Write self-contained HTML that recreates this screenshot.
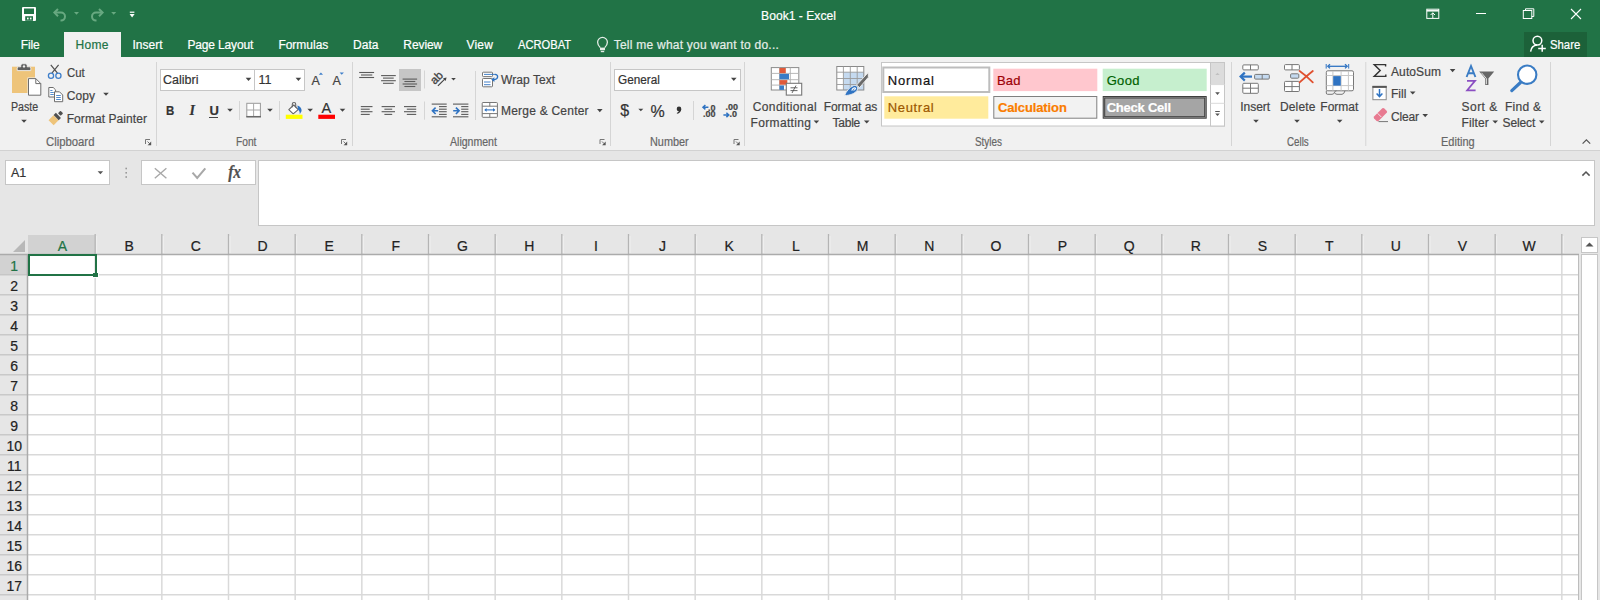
<!DOCTYPE html><html><head><meta charset="utf-8"><style>
html,body{margin:0;padding:0;width:1600px;height:600px;overflow:hidden;background:#fff;font-family:"Liberation Sans", sans-serif;}
.t{position:absolute;white-space:nowrap;line-height:1;-webkit-text-stroke:0.2px currentColor;}
svg{overflow:visible}
</style></head><body>
<div style="position:absolute;left:0px;top:0px;width:1600px;height:57px;background:#217346"></div>
<div style="position:absolute;left:64px;top:32px;width:57px;height:25px;background:#f1f1f1"></div>
<div style="position:absolute;left:0px;top:57px;width:1600px;height:93px;background:#f1f1f1"></div>
<div style="position:absolute;left:0px;top:150px;width:1600px;height:1px;background:#d2d2d2"></div>
<div style="position:absolute;left:0px;top:151px;width:1600px;height:83px;background:#e6e6e6"></div>
<div style="position:absolute;left:5px;top:160px;width:105px;height:25px;background:#fff;border:1px solid #c6c6c6;box-sizing:border-box"></div>
<div style="position:absolute;left:141px;top:160px;width:115px;height:25px;background:#fff;border:1px solid #c6c6c6;box-sizing:border-box"></div>
<div style="position:absolute;left:258px;top:160px;width:1337px;height:66px;background:#fff;border:1px solid #c6c6c6;box-sizing:border-box"></div>
<div style="position:absolute;left:1524px;top:32px;width:63px;height:25px;background:#1c6139"></div>
<div style="position:absolute;left:0px;top:234px;width:1579px;height:21px;background:#e6e6e6"></div>
<div style="position:absolute;left:28px;top:235px;width:67px;height:19px;background:#d2d2d2"></div>
<div style="position:absolute;left:0px;top:255px;width:28px;height:345px;background:#e6e6e6"></div>
<div style="position:absolute;left:0px;top:255px;width:27px;height:20px;background:#d2d2d2"></div>
<div style="position:absolute;left:28px;top:255px;width:1551px;height:345px;background:#ffffff"></div>
<svg style="position:absolute;left:0px;top:0px;pointer-events:none" width="1600" height="600" viewBox="0 0 1600 600"><line x1="95.17" y1="234" x2="95.17" y2="254" stroke="#b4b4b4" stroke-width="1.3"/><line x1="96.67" y1="236" x2="96.67" y2="253" stroke="#f2f2f2" stroke-width="0.8"/><line x1="95.17" y1="255" x2="95.17" y2="600" stroke="#d9d9d9" stroke-width="1.5"/><line x1="161.83" y1="234" x2="161.83" y2="254" stroke="#b4b4b4" stroke-width="1.3"/><line x1="163.33" y1="236" x2="163.33" y2="253" stroke="#f2f2f2" stroke-width="0.8"/><line x1="161.83" y1="255" x2="161.83" y2="600" stroke="#d9d9d9" stroke-width="1.5"/><line x1="228.50" y1="234" x2="228.50" y2="254" stroke="#b4b4b4" stroke-width="1.3"/><line x1="230.00" y1="236" x2="230.00" y2="253" stroke="#f2f2f2" stroke-width="0.8"/><line x1="228.50" y1="255" x2="228.50" y2="600" stroke="#d9d9d9" stroke-width="1.5"/><line x1="295.17" y1="234" x2="295.17" y2="254" stroke="#b4b4b4" stroke-width="1.3"/><line x1="296.67" y1="236" x2="296.67" y2="253" stroke="#f2f2f2" stroke-width="0.8"/><line x1="295.17" y1="255" x2="295.17" y2="600" stroke="#d9d9d9" stroke-width="1.5"/><line x1="361.83" y1="234" x2="361.83" y2="254" stroke="#b4b4b4" stroke-width="1.3"/><line x1="363.33" y1="236" x2="363.33" y2="253" stroke="#f2f2f2" stroke-width="0.8"/><line x1="361.83" y1="255" x2="361.83" y2="600" stroke="#d9d9d9" stroke-width="1.5"/><line x1="428.50" y1="234" x2="428.50" y2="254" stroke="#b4b4b4" stroke-width="1.3"/><line x1="430.00" y1="236" x2="430.00" y2="253" stroke="#f2f2f2" stroke-width="0.8"/><line x1="428.50" y1="255" x2="428.50" y2="600" stroke="#d9d9d9" stroke-width="1.5"/><line x1="495.17" y1="234" x2="495.17" y2="254" stroke="#b4b4b4" stroke-width="1.3"/><line x1="496.67" y1="236" x2="496.67" y2="253" stroke="#f2f2f2" stroke-width="0.8"/><line x1="495.17" y1="255" x2="495.17" y2="600" stroke="#d9d9d9" stroke-width="1.5"/><line x1="561.83" y1="234" x2="561.83" y2="254" stroke="#b4b4b4" stroke-width="1.3"/><line x1="563.33" y1="236" x2="563.33" y2="253" stroke="#f2f2f2" stroke-width="0.8"/><line x1="561.83" y1="255" x2="561.83" y2="600" stroke="#d9d9d9" stroke-width="1.5"/><line x1="628.50" y1="234" x2="628.50" y2="254" stroke="#b4b4b4" stroke-width="1.3"/><line x1="630.00" y1="236" x2="630.00" y2="253" stroke="#f2f2f2" stroke-width="0.8"/><line x1="628.50" y1="255" x2="628.50" y2="600" stroke="#d9d9d9" stroke-width="1.5"/><line x1="695.17" y1="234" x2="695.17" y2="254" stroke="#b4b4b4" stroke-width="1.3"/><line x1="696.67" y1="236" x2="696.67" y2="253" stroke="#f2f2f2" stroke-width="0.8"/><line x1="695.17" y1="255" x2="695.17" y2="600" stroke="#d9d9d9" stroke-width="1.5"/><line x1="761.83" y1="234" x2="761.83" y2="254" stroke="#b4b4b4" stroke-width="1.3"/><line x1="763.33" y1="236" x2="763.33" y2="253" stroke="#f2f2f2" stroke-width="0.8"/><line x1="761.83" y1="255" x2="761.83" y2="600" stroke="#d9d9d9" stroke-width="1.5"/><line x1="828.50" y1="234" x2="828.50" y2="254" stroke="#b4b4b4" stroke-width="1.3"/><line x1="830.00" y1="236" x2="830.00" y2="253" stroke="#f2f2f2" stroke-width="0.8"/><line x1="828.50" y1="255" x2="828.50" y2="600" stroke="#d9d9d9" stroke-width="1.5"/><line x1="895.17" y1="234" x2="895.17" y2="254" stroke="#b4b4b4" stroke-width="1.3"/><line x1="896.67" y1="236" x2="896.67" y2="253" stroke="#f2f2f2" stroke-width="0.8"/><line x1="895.17" y1="255" x2="895.17" y2="600" stroke="#d9d9d9" stroke-width="1.5"/><line x1="961.83" y1="234" x2="961.83" y2="254" stroke="#b4b4b4" stroke-width="1.3"/><line x1="963.33" y1="236" x2="963.33" y2="253" stroke="#f2f2f2" stroke-width="0.8"/><line x1="961.83" y1="255" x2="961.83" y2="600" stroke="#d9d9d9" stroke-width="1.5"/><line x1="1028.50" y1="234" x2="1028.50" y2="254" stroke="#b4b4b4" stroke-width="1.3"/><line x1="1030.00" y1="236" x2="1030.00" y2="253" stroke="#f2f2f2" stroke-width="0.8"/><line x1="1028.50" y1="255" x2="1028.50" y2="600" stroke="#d9d9d9" stroke-width="1.5"/><line x1="1095.17" y1="234" x2="1095.17" y2="254" stroke="#b4b4b4" stroke-width="1.3"/><line x1="1096.67" y1="236" x2="1096.67" y2="253" stroke="#f2f2f2" stroke-width="0.8"/><line x1="1095.17" y1="255" x2="1095.17" y2="600" stroke="#d9d9d9" stroke-width="1.5"/><line x1="1161.83" y1="234" x2="1161.83" y2="254" stroke="#b4b4b4" stroke-width="1.3"/><line x1="1163.33" y1="236" x2="1163.33" y2="253" stroke="#f2f2f2" stroke-width="0.8"/><line x1="1161.83" y1="255" x2="1161.83" y2="600" stroke="#d9d9d9" stroke-width="1.5"/><line x1="1228.50" y1="234" x2="1228.50" y2="254" stroke="#b4b4b4" stroke-width="1.3"/><line x1="1230.00" y1="236" x2="1230.00" y2="253" stroke="#f2f2f2" stroke-width="0.8"/><line x1="1228.50" y1="255" x2="1228.50" y2="600" stroke="#d9d9d9" stroke-width="1.5"/><line x1="1295.17" y1="234" x2="1295.17" y2="254" stroke="#b4b4b4" stroke-width="1.3"/><line x1="1296.67" y1="236" x2="1296.67" y2="253" stroke="#f2f2f2" stroke-width="0.8"/><line x1="1295.17" y1="255" x2="1295.17" y2="600" stroke="#d9d9d9" stroke-width="1.5"/><line x1="1361.83" y1="234" x2="1361.83" y2="254" stroke="#b4b4b4" stroke-width="1.3"/><line x1="1363.33" y1="236" x2="1363.33" y2="253" stroke="#f2f2f2" stroke-width="0.8"/><line x1="1361.83" y1="255" x2="1361.83" y2="600" stroke="#d9d9d9" stroke-width="1.5"/><line x1="1428.50" y1="234" x2="1428.50" y2="254" stroke="#b4b4b4" stroke-width="1.3"/><line x1="1430.00" y1="236" x2="1430.00" y2="253" stroke="#f2f2f2" stroke-width="0.8"/><line x1="1428.50" y1="255" x2="1428.50" y2="600" stroke="#d9d9d9" stroke-width="1.5"/><line x1="1495.17" y1="234" x2="1495.17" y2="254" stroke="#b4b4b4" stroke-width="1.3"/><line x1="1496.67" y1="236" x2="1496.67" y2="253" stroke="#f2f2f2" stroke-width="0.8"/><line x1="1495.17" y1="255" x2="1495.17" y2="600" stroke="#d9d9d9" stroke-width="1.5"/><line x1="1561.83" y1="234" x2="1561.83" y2="254" stroke="#b4b4b4" stroke-width="1.3"/><line x1="1563.33" y1="236" x2="1563.33" y2="253" stroke="#f2f2f2" stroke-width="0.8"/><line x1="1561.83" y1="255" x2="1561.83" y2="600" stroke="#d9d9d9" stroke-width="1.5"/><line x1="0" y1="274.8" x2="27" y2="274.8" stroke="#c4c4c4" stroke-width="1.3"/><line x1="28" y1="274.8" x2="1578" y2="274.8" stroke="#d9d9d9" stroke-width="1.5"/><line x1="0" y1="294.8" x2="27" y2="294.8" stroke="#c4c4c4" stroke-width="1.3"/><line x1="28" y1="294.8" x2="1578" y2="294.8" stroke="#d9d9d9" stroke-width="1.5"/><line x1="0" y1="314.8" x2="27" y2="314.8" stroke="#c4c4c4" stroke-width="1.3"/><line x1="28" y1="314.8" x2="1578" y2="314.8" stroke="#d9d9d9" stroke-width="1.5"/><line x1="0" y1="334.8" x2="27" y2="334.8" stroke="#c4c4c4" stroke-width="1.3"/><line x1="28" y1="334.8" x2="1578" y2="334.8" stroke="#d9d9d9" stroke-width="1.5"/><line x1="0" y1="354.8" x2="27" y2="354.8" stroke="#c4c4c4" stroke-width="1.3"/><line x1="28" y1="354.8" x2="1578" y2="354.8" stroke="#d9d9d9" stroke-width="1.5"/><line x1="0" y1="374.8" x2="27" y2="374.8" stroke="#c4c4c4" stroke-width="1.3"/><line x1="28" y1="374.8" x2="1578" y2="374.8" stroke="#d9d9d9" stroke-width="1.5"/><line x1="0" y1="394.8" x2="27" y2="394.8" stroke="#c4c4c4" stroke-width="1.3"/><line x1="28" y1="394.8" x2="1578" y2="394.8" stroke="#d9d9d9" stroke-width="1.5"/><line x1="0" y1="414.8" x2="27" y2="414.8" stroke="#c4c4c4" stroke-width="1.3"/><line x1="28" y1="414.8" x2="1578" y2="414.8" stroke="#d9d9d9" stroke-width="1.5"/><line x1="0" y1="434.8" x2="27" y2="434.8" stroke="#c4c4c4" stroke-width="1.3"/><line x1="28" y1="434.8" x2="1578" y2="434.8" stroke="#d9d9d9" stroke-width="1.5"/><line x1="0" y1="454.8" x2="27" y2="454.8" stroke="#c4c4c4" stroke-width="1.3"/><line x1="28" y1="454.8" x2="1578" y2="454.8" stroke="#d9d9d9" stroke-width="1.5"/><line x1="0" y1="474.8" x2="27" y2="474.8" stroke="#c4c4c4" stroke-width="1.3"/><line x1="28" y1="474.8" x2="1578" y2="474.8" stroke="#d9d9d9" stroke-width="1.5"/><line x1="0" y1="494.8" x2="27" y2="494.8" stroke="#c4c4c4" stroke-width="1.3"/><line x1="28" y1="494.8" x2="1578" y2="494.8" stroke="#d9d9d9" stroke-width="1.5"/><line x1="0" y1="514.8" x2="27" y2="514.8" stroke="#c4c4c4" stroke-width="1.3"/><line x1="28" y1="514.8" x2="1578" y2="514.8" stroke="#d9d9d9" stroke-width="1.5"/><line x1="0" y1="534.8" x2="27" y2="534.8" stroke="#c4c4c4" stroke-width="1.3"/><line x1="28" y1="534.8" x2="1578" y2="534.8" stroke="#d9d9d9" stroke-width="1.5"/><line x1="0" y1="554.8" x2="27" y2="554.8" stroke="#c4c4c4" stroke-width="1.3"/><line x1="28" y1="554.8" x2="1578" y2="554.8" stroke="#d9d9d9" stroke-width="1.5"/><line x1="0" y1="574.8" x2="27" y2="574.8" stroke="#c4c4c4" stroke-width="1.3"/><line x1="28" y1="574.8" x2="1578" y2="574.8" stroke="#d9d9d9" stroke-width="1.5"/><line x1="0" y1="594.8" x2="27" y2="594.8" stroke="#c4c4c4" stroke-width="1.3"/><line x1="28" y1="594.8" x2="1578" y2="594.8" stroke="#d9d9d9" stroke-width="1.5"/><line x1="0" y1="254.5" x2="1579" y2="254.5" stroke="#ababab" stroke-width="1.5"/><line x1="27.5" y1="255" x2="27.5" y2="600" stroke="#ababab" stroke-width="1.5"/><line x1="1578.5" y1="255" x2="1578.5" y2="600" stroke="#bdbdbd" stroke-width="1"/></svg>
<svg style="position:absolute;left:0px;top:234px;" width="28" height="21" viewBox="0 0 28 21"><polygon points="25,6 25,18 13,18" fill="#b8b8b8"/></svg>
<div style="position:absolute;left:28px;top:254px;width:69px;height:22px;border:2px solid #217346;box-sizing:border-box"></div>
<div style="position:absolute;left:92.5px;top:272.5px;width:6px;height:5.5px;background:#fff"></div>
<div style="position:absolute;left:93.3px;top:273.2px;width:4.5px;height:4px;background:#217346"></div>
<div style="position:absolute;left:1579px;top:234px;width:21px;height:366px;background:#e6e6e6"></div>
<div style="position:absolute;left:1581px;top:237px;width:17px;height:16px;background:#fff;border:1px solid #c6c6c6;box-sizing:border-box"></div>
<div style="position:absolute;left:1581px;top:254px;width:17px;height:360px;background:#fff;border:1px solid #c6c6c6;box-sizing:border-box"></div>
<svg style="position:absolute;left:1585px;top:242px;" width="9" height="5" viewBox="0 0 9 5"><polygon points="0.5,4.5 4.5,0.5 8.5,4.5" fill="#555"/></svg>
<svg style="position:absolute;left:0px;top:0px;" width="1600" height="600" viewBox="0 0 1600 600"><rect x="22" y="7" width="14" height="14" rx="1" fill="#ffffff"/><rect x="24" y="8.5" width="10" height="5.5" fill="#217346"/><rect x="25.2" y="16.2" width="7.8" height="4.6" fill="#217346"/><rect x="27" y="17.6" width="1.6" height="1.8" fill="#ffffff"/><rect x="29.9" y="17.6" width="1.6" height="1.8" fill="#ffffff"/><path d="M55.5,12.6 H61 A4,4 0 0 1 61,20.6 H60.5" stroke="#68a981" stroke-width="2" fill="none"/><path d="M58,9 L54.4,12.6 L58,16.2" stroke="#68a981" stroke-width="2" fill="none"/><polygon points="74.0,12.0 79.0,12.0 76.5,14.8" fill="#68a981"/><path d="M101.5,12.6 H96 A4,4 0 0 0 96,20.6 H96.5" stroke="#68a981" stroke-width="2" fill="none"/><path d="M99,9 L102.6,12.6 L99,16.2" stroke="#68a981" stroke-width="2" fill="none"/><polygon points="111.2,12.0 116.2,12.0 113.7,14.8" fill="#68a981"/><rect x="129.8" y="11.6" width="4.6" height="1.2" fill="#ffffff"/><polygon points="129.6,14 134.6,14 132.1,17.4" fill="#ffffff"/><rect x="1426.8" y="9.2" width="12" height="9.2" stroke="#ffffff" stroke-width="1" fill="none"/><line x1="1426.8" y1="10.8" x2="1438.8" y2="10.8" stroke="#ffffff" stroke-width="1.5"/><path d="M1432.8,18 V12.8 M1430.6,15 L1432.8,12.8 L1435,15" stroke="#ffffff" stroke-width="1" fill="none"/><line x1="1476" y1="13.5" x2="1486" y2="13.5" stroke="#ffffff" stroke-width="1"/><rect x="1523.3" y="10.5" width="8.5" height="8" stroke="#ffffff" stroke-width="1" fill="none"/><path d="M1525.5,10.5 V8.8 H1533.8 V16.5 H1531.8" stroke="#ffffff" stroke-width="1" fill="none"/><path d="M1571,9 L1581,19 M1581,9 L1571,19" stroke="#ffffff" stroke-width="1.1"/><path d="M600.3,47.6 C598.6,46 597.6,44.2 597.6,42.3 A4.9,4.9 0 0 1 607.4,42.3 C607.4,44.2 606.4,46 604.7,47.6" stroke="#e3ece6" stroke-width="1.3" fill="none"/><rect x="600" y="47.6" width="5" height="2.6" fill="#e3ece6"/><rect x="600.8" y="50.8" width="3.4" height="1.4" fill="#e3ece6"/><circle cx="1537.4" cy="40.6" r="4.4" stroke="#ffffff" stroke-width="1.5" fill="none"/><path d="M1530.6,51.6 C1531.2,47.6 1533.6,45.4 1537,45.1" stroke="#ffffff" stroke-width="1.5" fill="none"/><path d="M1542.2,44.8 V51.8 M1538.2,48.4 H1545.8" stroke="#ffffff" stroke-width="1.5"/><rect x="12" y="66.7" width="23" height="26.3" fill="#eec47a"/><path d="M17.2,70.6 V68.2 Q17.2,66.8 18.6,66.8 H20.8 V65.4 Q20.8,63.8 22.4,63.8 H25.6 Q27.2,63.8 27.2,65.4 V66.8 H29.4 Q30.8,66.8 30.8,68.2 V70.6 Z" fill="#5f5f5f" stroke="#f1f1f1" stroke-width="0.9"/><circle cx="24" cy="66.4" r="1.2" fill="#f1f1f1"/><path d="M27.5,77.6 H36.3 L41.8,83.1 V96.2 H27.5 Z" fill="#f1f1f1"/><path d="M28.5,78.6 H35.8 L40.8,83.6 V95.2 H28.5 Z" fill="#fff" stroke="#6d6d6d" stroke-width="1"/><path d="M35.8,78.6 V83.6 H40.8" fill="none" stroke="#6d6d6d" stroke-width="1"/><polygon points="21.2,119.75 26.8,119.75 24,122.85" fill="#444"/><path d="M50.8,64.8 L57.5,73.2 M58.6,64.8 L51.9,73.2" stroke="#505050" stroke-width="1.2"/><circle cx="51" cy="75.8" r="2.6" stroke="#3f7fca" stroke-width="1.3" fill="none"/><circle cx="58.4" cy="75.8" r="2.6" stroke="#3f7fca" stroke-width="1.3" fill="none"/><path d="M48.8,87.5 H53.2 L55.6,89.9 V97 H48.8 Z" fill="#fff" stroke="#6d6d6d" stroke-width="1"/><path d="M50.3,90.5 H52.5 M50.3,92.5 H53.8 M50.3,94.5 H53.8" stroke="#3f7fca" stroke-width="0.9"/><path d="M54.5,91.8 H59.5 L62.7,95 V101.7 H54.5 Z" fill="#fff" stroke="#6d6d6d" stroke-width="1"/><path d="M56.2,95.5 H60.8 M56.2,97.5 H60.8 M56.2,99.5 H60.8" stroke="#3f7fca" stroke-width="0.9"/><polygon points="103.2,92.75 108.8,92.75 106,95.85" fill="#444"/><g transform="translate(56.5,117.3) rotate(-45)"><rect x="-7.6" y="-3.6" width="6.9" height="7.2" fill="#eec47a"/><rect x="-0.5" y="-3.6" width="3.2" height="7.2" fill="#4f4f4f"/><rect x="3.9" y="-1.9" width="3.6" height="3.8" rx="0.8" fill="#4f4f4f"/></g><path d="M145.5,144 V139.5 H150" stroke="#777" stroke-width="1" fill="none"/><path d="M147.5,141.5 L149.8,143.8" stroke="#666" stroke-width="0.9" fill="none"/><polygon points="151.2,141.6 151.2,145.2 147.6,145.2" fill="#555"/><line x1="156.5" y1="62" x2="156.5" y2="146" stroke="#d5d5d5" stroke-width="1"/><rect x="160.5" y="69.5" width="94" height="21" fill="#fff" stroke="#c6c6c6" stroke-width="1"/><rect x="254.5" y="69.5" width="50" height="21" fill="#fff" stroke="#c6c6c6" stroke-width="1"/><polygon points="245.7,77.85000000000001 251.3,77.85000000000001 248.5,80.95" fill="#444"/><polygon points="295.59999999999997,77.85000000000001 301.2,77.85000000000001 298.4,80.95" fill="#444"/><polygon points="318.8,74.7 320.9,72.5 323,74.7" fill="#3f7fca"/><polygon points="339.6,72.5 343.9,72.5 341.75,74.7" fill="#3f7fca"/><polygon points="227.2,108.65 232.8,108.65 230,111.75" fill="#444"/><line x1="239.5" y1="101" x2="239.5" y2="120" stroke="#d5d5d5" stroke-width="1"/><rect x="246.8" y="103.3" width="13.6" height="13.4" fill="#fff" stroke="#9a9a9a" stroke-width="1"/><path d="M253.6,103.3 V116.7 M246.8,110 H260.4" stroke="#a8a8a8" stroke-width="1"/><line x1="246.3" y1="116.7" x2="261" y2="116.7" stroke="#6a6a6a" stroke-width="1.5"/><polygon points="267.2,108.65 272.8,108.65 270,111.75" fill="#444"/><line x1="279.5" y1="101" x2="279.5" y2="120" stroke="#d5d5d5" stroke-width="1"/><path d="M288.8,109.6 L293.8,105 L298.2,109.6 L293.2,113.8 Z" fill="#fff" stroke="#666" stroke-width="1.1" stroke-linejoin="round"/><path d="M292.3,107.2 V104.2 A1.7,1.7 0 0 1 295.7,104.2 V107.4" stroke="#666" stroke-width="1.1" fill="none"/><path d="M297.4,105.6 C300,106.4 301.8,108.4 301.6,111 L299.8,114.2 C299.8,112.2 299.4,110.4 298,109.4 Z" fill="#2f73c2"/><rect x="285.8" y="114.7" width="16.7" height="4.2" fill="#ffff00"/><polygon points="307.4,108.65 313.0,108.65 310.2,111.75" fill="#444"/><rect x="318.3" y="114.7" width="16.7" height="4.2" fill="#ff0000"/><polygon points="339.7,108.65 345.3,108.65 342.5,111.75" fill="#444"/><path d="M341.5,144 V139.5 H346" stroke="#777" stroke-width="1" fill="none"/><path d="M343.5,141.5 L345.8,143.8" stroke="#666" stroke-width="0.9" fill="none"/><polygon points="347.2,141.6 347.2,145.2 343.6,145.2" fill="#555"/><line x1="352.5" y1="62" x2="352.5" y2="146" stroke="#d5d5d5" stroke-width="1"/><line x1="359.2" y1="72.5" x2="374.1" y2="72.5" stroke="#5a5a5a" stroke-width="1.1"/><line x1="361" y1="75" x2="372.3" y2="75" stroke="#5a5a5a" stroke-width="1.1"/><line x1="359.2" y1="77.5" x2="374.1" y2="77.5" stroke="#5a5a5a" stroke-width="1.1"/><line x1="381.1" y1="75.6" x2="395.8" y2="75.6" stroke="#5a5a5a" stroke-width="1.1"/><line x1="383" y1="78.1" x2="393.7" y2="78.1" stroke="#5a5a5a" stroke-width="1.1"/><line x1="381.1" y1="80.7" x2="395.8" y2="80.7" stroke="#5a5a5a" stroke-width="1.1"/><line x1="383" y1="83.3" x2="393.7" y2="83.3" stroke="#5a5a5a" stroke-width="1.1"/><rect x="399" y="69" width="22" height="22" fill="#c6c6c6"/><line x1="402.6" y1="79.1" x2="417.1" y2="79.1" stroke="#5a5a5a" stroke-width="1.1"/><line x1="404.4" y1="81.5" x2="415.3" y2="81.5" stroke="#5a5a5a" stroke-width="1.1"/><line x1="402.6" y1="84" x2="417.1" y2="84" stroke="#5a5a5a" stroke-width="1.1"/><line x1="404.4" y1="86.5" x2="415.3" y2="86.5" stroke="#5a5a5a" stroke-width="1.1"/><line x1="424.5" y1="70.5" x2="424.5" y2="88.5" stroke="#d5d5d5" stroke-width="1"/><text x="0" y="0" font-family="Liberation Sans" font-size="11.5" fill="#444" stroke="#444" stroke-width="0.35" transform="translate(434.8,84.9) rotate(-45)">ab</text><path d="M437.9,85.9 L445,78.8" stroke="#444" stroke-width="1.2" fill="none"/><polygon points="446.6,77.4 443,78.3 445.7,81" fill="#444"/><polygon points="451.2,78.0 455.8,78.0 453.5,80.6" fill="#444"/><line x1="360.8" y1="106.6" x2="372.5" y2="106.6" stroke="#5a5a5a" stroke-width="1.1"/><line x1="360.8" y1="109.2" x2="369.7" y2="109.2" stroke="#5a5a5a" stroke-width="1.1"/><line x1="360.8" y1="111.7" x2="372.5" y2="111.7" stroke="#5a5a5a" stroke-width="1.1"/><line x1="360.8" y1="114.4" x2="369.7" y2="114.4" stroke="#5a5a5a" stroke-width="1.1"/><line x1="381.6" y1="106.6" x2="395" y2="106.6" stroke="#5a5a5a" stroke-width="1.1"/><line x1="384.4" y1="109.2" x2="392.2" y2="109.2" stroke="#5a5a5a" stroke-width="1.1"/><line x1="381.6" y1="111.7" x2="395" y2="111.7" stroke="#5a5a5a" stroke-width="1.1"/><line x1="384.4" y1="114.4" x2="392.2" y2="114.4" stroke="#5a5a5a" stroke-width="1.1"/><line x1="404" y1="106.6" x2="416.2" y2="106.6" stroke="#5a5a5a" stroke-width="1.1"/><line x1="406.8" y1="109.2" x2="416.2" y2="109.2" stroke="#5a5a5a" stroke-width="1.1"/><line x1="404" y1="111.7" x2="416.2" y2="111.7" stroke="#5a5a5a" stroke-width="1.1"/><line x1="406.8" y1="114.4" x2="416.2" y2="114.4" stroke="#5a5a5a" stroke-width="1.1"/><line x1="424.5" y1="101.5" x2="424.5" y2="119.7" stroke="#d5d5d5" stroke-width="1"/><line x1="431.7" y1="104.1" x2="446.7" y2="104.1" stroke="#5a5a5a" stroke-width="1.1"/><line x1="439" y1="106.6" x2="446.7" y2="106.6" stroke="#5a5a5a" stroke-width="1.1"/><line x1="439" y1="109.2" x2="446.7" y2="109.2" stroke="#5a5a5a" stroke-width="1.1"/><line x1="439" y1="111.7" x2="446.7" y2="111.7" stroke="#5a5a5a" stroke-width="1.1"/><line x1="439" y1="114.4" x2="446.7" y2="114.4" stroke="#5a5a5a" stroke-width="1.1"/><line x1="431.7" y1="116.8" x2="446.7" y2="116.8" stroke="#5a5a5a" stroke-width="1.1"/><path d="M438.2,110.8 H432.5 M435.6,107.6 L432.4,110.8 L435.6,114" stroke="#2f73c2" stroke-width="1.6" fill="none"/><line x1="453" y1="104.1" x2="468.4" y2="104.1" stroke="#5a5a5a" stroke-width="1.1"/><line x1="461.2" y1="106.6" x2="468.4" y2="106.6" stroke="#5a5a5a" stroke-width="1.1"/><line x1="461.2" y1="109.2" x2="468.4" y2="109.2" stroke="#5a5a5a" stroke-width="1.1"/><line x1="461.2" y1="111.7" x2="468.4" y2="111.7" stroke="#5a5a5a" stroke-width="1.1"/><line x1="461.2" y1="114.4" x2="468.4" y2="114.4" stroke="#5a5a5a" stroke-width="1.1"/><line x1="453" y1="116.8" x2="468.4" y2="116.8" stroke="#5a5a5a" stroke-width="1.1"/><path d="M453.2,110.8 H459 M455.9,107.6 L459.1,110.8 L455.9,114" stroke="#2f73c2" stroke-width="1.6" fill="none"/><line x1="475.5" y1="71" x2="475.5" y2="120" stroke="#d5d5d5" stroke-width="1"/><rect x="482.5" y="72.2" width="10" height="4.4" rx="0.8" fill="#fff" stroke="#777" stroke-width="1"/><rect x="482.5" y="78.5" width="10" height="8.3" rx="0.8" fill="#fff" stroke="#777" stroke-width="1"/><path d="M484,74.4 H495 M484,82 H490.5 M484,84.7 H490.5" stroke="#2f73c2" stroke-width="0.9"/><path d="M495,74.4 C498.5,74.6 498.7,79 494.5,79.6 H492.2" stroke="#2f73c2" stroke-width="1.3" fill="none"/><polygon points="491.2,79.6 494.4,77.2 494.4,82" fill="#2f73c2"/><rect x="482.2" y="102.5" width="15.2" height="14.8" rx="0.8" fill="#fff" stroke="#777" stroke-width="1"/><path d="M482.2,106.2 H497.4 M482.2,113.6 H497.4 M489.8,102.5 V106.2 M489.8,113.6 V117.3" stroke="#777" stroke-width="1"/><path d="M485,109.9 H494.6" stroke="#2f73c2" stroke-width="1.1"/><polygon points="484.2,109.9 486.6,108.1 486.6,111.7" fill="#2f73c2"/><polygon points="495.4,109.9 493,108.1 493,111.7" fill="#2f73c2"/><polygon points="597.0,109.05 602.5999999999999,109.05 599.8,112.14999999999999" fill="#444"/><path d="M600.0,144 V139.5 H604.5" stroke="#777" stroke-width="1" fill="none"/><path d="M602.0,141.5 L604.3,143.8" stroke="#666" stroke-width="0.9" fill="none"/><polygon points="605.7,141.6 605.7,145.2 602.1,145.2" fill="#555"/><line x1="610.5" y1="62" x2="610.5" y2="146" stroke="#d5d5d5" stroke-width="1"/><rect x="614.5" y="69.5" width="126" height="21" fill="#fff" stroke="#c6c6c6" stroke-width="1"/><polygon points="731.0,77.85000000000001 736.5999999999999,77.85000000000001 733.8,80.95" fill="#444"/><polygon points="638.3,108.7 643.3,108.7 640.8,111.3" fill="#444"/><line x1="693.5" y1="101" x2="693.5" y2="120" stroke="#d5d5d5" stroke-width="1"/><circle cx="679" cy="108.9" r="2.3" fill="#333"/><path d="M681.2,109 C681.3,111.5 679.8,113.2 677,113.8 L676.8,113 C678.5,112.2 679.3,111 679.2,109.5 Z" fill="#333"/><path d="M708.4,107.2 H703.2 M705.4,105 L703,107.2 L705.4,109.4" stroke="#2f73c2" stroke-width="1.5" fill="none"/><path d="M723.4,114.9 H728.6 M726.4,112.7 L728.8,114.9 L726.4,117.1" stroke="#2f73c2" stroke-width="1.5" fill="none"/><path d="M734.0,144 V139.5 H738.5" stroke="#777" stroke-width="1" fill="none"/><path d="M736.0,141.5 L738.3,143.8" stroke="#666" stroke-width="0.9" fill="none"/><polygon points="739.7,141.6 739.7,145.2 736.1,145.2" fill="#555"/><line x1="744.5" y1="62" x2="744.5" y2="146" stroke="#d5d5d5" stroke-width="1"/><rect x="771.3" y="67.6" width="27.5" height="22.4" fill="#fff" stroke="#8a8a8a" stroke-width="1"/><path d="M779.5,67.6 V90 M790.3,67.6 V90 M771.3,73.4 H798.8 M771.3,79.7 H798.8 M771.3,85.1 H798.8" stroke="#b0b0b0" stroke-width="0.9"/><rect x="779.5" y="68" width="6.3" height="5.2" fill="#e05a3a"/><rect x="779.5" y="73.9" width="9.5" height="5.4" fill="#3a7cc6"/><rect x="779.5" y="80.1" width="7.8" height="4.6" fill="#e05a3a"/><rect x="779.5" y="85.5" width="4.5" height="4.4" fill="#3a7cc6"/><rect x="786.3" y="83.3" width="15.4" height="11.8" fill="#fff" stroke="#777" stroke-width="1.1"/><path d="M790.5,87.8 H797.5 M790.5,90.6 H797.5 M796,85.5 L792,93" stroke="#555" stroke-width="0.9"/><polygon points="813.6,120.45 819.1999999999999,120.45 816.4,123.55" fill="#444"/><rect x="836.8" y="66.5" width="27" height="23.5" fill="#fff"/><rect x="843.4" y="72.2" width="20.7" height="18" fill="#c5daf0"/><rect x="836.8" y="66.5" width="27" height="23.5" fill="none" stroke="#8a8a8a" stroke-width="1"/><path d="M843.4,66.5 V90 M850.3,66.5 V90 M857.2,66.5 V90 M836.8,72.2 H863.8 M836.8,78.5 H863.8 M836.8,84.5 H863.8" stroke="#9a9a9a" stroke-width="0.9"/><path d="M856.6,85 L868.2,72.6 L868.4,77.2 L859.6,87.6 Z" fill="#6a6a6a" stroke="#f1f1f1" stroke-width="0.9"/><path d="M844.6,95.6 C846.2,91.2 849.6,87 853.6,85.6 C856.6,84.8 858.6,87.2 857.2,90.2 C855,93.8 849.6,95.4 844.6,95.6 Z" fill="#2f73c2" stroke="#f1f1f1" stroke-width="0.9"/><path d="M851.8,90.6 C852.4,88.4 854.2,87.4 855.6,88.2 C855.4,89.4 854.6,90.2 853.4,90.2" stroke="#fff" stroke-width="1.1" fill="none"/><polygon points="863.9000000000001,120.45 869.5,120.45 866.7,123.55" fill="#444"/><rect x="881.5" y="62.5" width="343" height="63.5" fill="#fff" stroke="#c6c6c6" stroke-width="1"/><rect x="883.3" y="67.5" width="106" height="24.5" fill="#fff" stroke="#bdbdbd" stroke-width="2"/><rect x="993.3" y="68.7" width="104" height="22.4" fill="#ffc7ce"/><rect x="1102.7" y="68.7" width="104" height="22.4" fill="#c6efce"/><rect x="884.3" y="96.3" width="104" height="22.4" fill="#ffeb9c"/><rect x="993.8" y="96.5" width="103" height="21.7" fill="#f2f2f2" stroke="#7f7f7f" stroke-width="1"/><rect x="1103.2" y="96.5" width="103" height="21.7" fill="#a5a5a5" stroke="#3f3f3f" stroke-width="1"/><rect x="1104.7" y="98" width="100" height="18.7" fill="none" stroke="#3f3f3f" stroke-width="1"/><rect x="1210.5" y="62.5" width="14" height="63.5" fill="#fff" stroke="#c6c6c6" stroke-width="1"/><rect x="1211" y="63" width="13" height="21.5" fill="#dcdcdc"/><path d="M1210.5,84.6 H1224.5 M1210.5,103.3 H1224.5" stroke="#dadada" stroke-width="1"/><polygon points="1215.3,75 1219.7,75 1217.5,72.8" fill="#c0c0c0"/><polygon points="1215.2,92.3 1219.8,92.3 1217.5,94.89999999999999" fill="#555"/><rect x="1215.2" y="111" width="4.6" height="1" fill="#555"/><polygon points="1215.2,113.5 1219.8,113.5 1217.5,116.1" fill="#555"/><line x1="1231.5" y1="62" x2="1231.5" y2="146" stroke="#d5d5d5" stroke-width="1"/><rect x="1242.8" y="64.9" width="15.5" height="5.0" rx="1" fill="#fff" stroke="#777" stroke-width="1"/><line x1="1250.5" y1="64.9" x2="1250.5" y2="69.9" stroke="#777" stroke-width="1"/><rect x="1254.6" y="74.4" width="14.700000000000045" height="4.699999999999989" rx="1" fill="#c5daf0" stroke="#777" stroke-width="1"/><line x1="1262.2" y1="74.4" x2="1262.2" y2="79.1" stroke="#777" stroke-width="1"/><rect x="1242.8" y="83.3" width="15.5" height="10" rx="1" fill="#fff" stroke="#777" stroke-width="1"/><path d="M1250.5,83.3 V93.3 M1242.8,88.2 H1258.3" stroke="#777" stroke-width="1"/><path d="M1252,76.6 H1242" stroke="#2f73c2" stroke-width="2.2"/><path d="M1244.8,72.6 L1240.6,76.6 L1244.8,80.6" stroke="#2f73c2" stroke-width="2.2" fill="none"/><polygon points="1253.2,119.75 1258.8,119.75 1256,122.85" fill="#444"/><rect x="1284.5" y="64.6" width="14.900000000000091" height="5.300000000000011" rx="1" fill="#fff" stroke="#777" stroke-width="1"/><line x1="1292" y1="64.6" x2="1292" y2="69.9" stroke="#777" stroke-width="1"/><rect x="1290.6" y="73.8" width="8.200000000000045" height="4.400000000000006" rx="1" fill="#c5daf0" stroke="#777" stroke-width="1"/><rect x="1284.5" y="81.4" width="14.9" height="10.1" rx="1" fill="#fff" stroke="#777" stroke-width="1"/><path d="M1292,81.4 V91.5 M1284.5,86.6 H1299.4" stroke="#777" stroke-width="1"/><path d="M1299.6,71 Q1306,75.5 1312.8,82.3 M1312.8,71 Q1306,76.5 1299.6,82.3" stroke="#e0502f" stroke-width="1.8" fill="none" stroke-linecap="round"/><polygon points="1294.2,119.75 1299.8,119.75 1297,122.85" fill="#444"/><path d="M1326.2,64 V68.6 M1348.7,64 V68.6" stroke="#2f73c2" stroke-width="1"/><path d="M1328.5,66.3 H1346.4" stroke="#2f73c2" stroke-width="1.3"/><path d="M1330,64.2 L1327.8,66.3 L1330,68.4 M1345,64.2 L1347.2,66.3 L1345,68.4" stroke="#2f73c2" stroke-width="1.3" fill="none"/><rect x="1326.3" y="70.8" width="27.2" height="20" rx="1.5" fill="#fff" stroke="#777" stroke-width="1"/><path d="M1332.9,71 V90.6 M1341.1,71 V90.6 M1348.4,71 V90.6 M1326.5,75.5 H1353.3 M1326.5,85.6 H1353.3" stroke="#c8c8c8" stroke-width="1"/><rect x="1333.2" y="76.1" width="7.6" height="9.5" fill="#2f73c2"/><path d="M1326.3,90.8 V93 Q1326.3,94.3 1327.6,94.3 H1332 Q1334,94.3 1334.5,92.3 Q1335,90.8 1336.5,90.8 M1334.5,92.3 Q1335,94.3 1337,94.3 H1342 Q1344,94.3 1345,90.8" stroke="#777" stroke-width="1" fill="none"/><polygon points="1336.9,119.75 1342.5,119.75 1339.7,122.85" fill="#444"/><line x1="1365.8" y1="62" x2="1365.8" y2="146" stroke="#d5d5d5" stroke-width="1"/><path d="M1385.6,66.5 V64.6 H1374.2 L1380.2,70.6 L1374.2,76.4 H1385.8 V74.5" stroke="#333" stroke-width="1.4" fill="none" stroke-linejoin="miter"/><polygon points="1449.8,69.05 1455.3999999999999,69.05 1452.6,72.14999999999999" fill="#444"/><rect x="1372.9" y="86.4" width="13.3" height="13.3" fill="#fff" stroke="#8a8a8a" stroke-width="1"/><line x1="1372.4" y1="86.9" x2="1386.7" y2="86.9" stroke="#555" stroke-width="2"/><path d="M1379.5,89 V96.5 M1376.6,93.6 L1379.5,96.6 L1382.4,93.6" stroke="#2f73c2" stroke-width="1.5" fill="none"/><polygon points="1409.9,91.45 1415.5,91.45 1412.7,94.55" fill="#444"/><path d="M1374,116.6 L1382.3,108.3 Q1383.4,107.6 1384.4,108.5 L1386.8,110.9 Q1387.5,111.8 1386.7,112.8 L1378.5,121 Q1377.6,121.7 1376.6,121 L1374.1,118.6 Q1373.3,117.6 1374,116.6 Z" fill="#e87a91"/><path d="M1377.5,113.2 L1381.3,117" stroke="#f1f1f1" stroke-width="0.9"/><line x1="1378.5" y1="121.6" x2="1388" y2="121.6" stroke="#777" stroke-width="1"/><polygon points="1422.4,114.05 1428.0,114.05 1425.2,117.14999999999999" fill="#444"/><path d="M1466.6,77 L1471,66 L1475.4,77 M1468.3,73.2 H1473.7" stroke="#3a7cc4" stroke-width="1.9" fill="none"/><path d="M1467,80.8 H1475 L1467.2,90.3 H1475.6" stroke="#8b4fc2" stroke-width="1.8" fill="none" stroke-linejoin="miter"/><path d="M1479.2,71.4 H1494.2 L1488.4,78.4 V85 H1485.2 V78.4 Z" fill="#666"/><path d="M1481.5,72.8 L1486.4,78.6 V84.2" stroke="#fff" stroke-width="0.8" fill="none"/><polygon points="1492.4,120.45 1498.0,120.45 1495.2,123.55" fill="#444"/><circle cx="1527.2" cy="74.7" r="9.2" fill="#fff" stroke="#3a7cc4" stroke-width="2.1"/><line x1="1520.5" y1="82.5" x2="1511.8" y2="90.6" stroke="#3a7cc4" stroke-width="3.2" stroke-linecap="round"/><polygon points="1538.9,120.45 1544.5,120.45 1541.7,123.55" fill="#444"/><line x1="1550.5" y1="62" x2="1550.5" y2="146" stroke="#d5d5d5" stroke-width="1"/><path d="M1582.6,143.6 L1586.4,139.8 L1590.2,143.6" stroke="#555" stroke-width="1.2" fill="none"/><polygon points="97.65,171.2 103.15,171.2 100.4,174.2" fill="#555"/><rect x="125.4" y="167.7" width="1.6" height="1.6" fill="#999"/><rect x="125.4" y="172.0" width="1.6" height="1.6" fill="#999"/><rect x="125.4" y="176.2" width="1.6" height="1.6" fill="#999"/><path d="M154.8,168.3 L166.4,178.2 M166.4,168.3 L154.8,178.2" stroke="#a8a8a8" stroke-width="1.4"/><path d="M192.5,172.6 L197.2,178 L205.3,168.4" stroke="#a8a8a8" stroke-width="2" fill="none"/><path d="M1582.4,175.6 L1586,172 L1589.6,175.6" stroke="#555" stroke-width="1.5" fill="none"/></svg>
<div style="position:absolute;left:209.3px;top:116.5px;width:8.8px;height:1.2px;background:#444"></div>
<div class="t" id="t0" style="left:761.00px;top:9.20px;font-size:13px;color:#ffffff;transform:scaleX(0.9330);transform-origin:1.00px 0;">Book1 - Excel</div>
<div class="t" id="t1" style="left:20.80px;top:39.14px;font-size:12px;color:#ffffff;letter-spacing:-0.154px;">File</div>
<div class="t" id="t2" style="left:132.40px;top:39.14px;font-size:12px;color:#ffffff;letter-spacing:0.024px;">Insert</div>
<div class="t" id="t3" style="left:187.40px;top:39.14px;font-size:12px;color:#ffffff;letter-spacing:-0.145px;">Page Layout</div>
<div class="t" id="t4" style="left:278.40px;top:39.14px;font-size:12px;color:#ffffff;letter-spacing:-0.016px;">Formulas</div>
<div class="t" id="t5" style="left:352.90px;top:39.14px;font-size:12px;color:#ffffff;letter-spacing:0.075px;">Data</div>
<div class="t" id="t6" style="left:403.30px;top:39.14px;font-size:12px;color:#ffffff;letter-spacing:-0.076px;">Review</div>
<div class="t" id="t7" style="left:466.50px;top:39.14px;font-size:12px;color:#ffffff;letter-spacing:0.191px;">View</div>
<div class="t" id="t8" style="left:517.70px;top:39.14px;font-size:12px;color:#ffffff;transform:scaleX(0.9310);transform-origin:0.00px 0;">ACROBAT</div>
<div class="t" id="t9" style="left:75.40px;top:39.14px;font-size:12px;color:#217346;letter-spacing:0.355px;">Home</div>
<div class="t" id="t10" style="left:613.70px;top:39.14px;font-size:12px;color:#e6eee9;letter-spacing:0.243px;">Tell me what you want to do...</div>
<div class="t" id="t11" style="left:1549.50px;top:39.24px;font-size:12px;color:#ffffff;transform:scaleX(0.9429);transform-origin:0.00px 0;">Share</div>
<div class="t" id="t12" style="left:10.50px;top:101.04px;font-size:12px;color:#444444;transform:scaleX(0.8868);transform-origin:0.00px 0;">Paste</div>
<div class="t" id="t13" style="left:66.70px;top:66.94px;font-size:12px;color:#444444;transform:scaleX(0.9462);transform-origin:0.00px 0;">Cut</div>
<div class="t" id="t14" style="left:66.70px;top:89.74px;font-size:12px;color:#444444;letter-spacing:0.095px;">Copy</div>
<div class="t" id="t15" style="left:66.70px;top:112.54px;font-size:12px;color:#444444;letter-spacing:0.072px;">Format Painter</div>
<div class="t" id="t16" style="left:46.00px;top:136.04px;font-size:12px;color:#666666;transform:scaleX(0.9430);transform-origin:0.00px 0;">Clipboard</div>
<div class="t" id="t17" style="left:163.00px;top:74.02px;font-size:12.5px;color:#333;">Calibri</div>
<div class="t" id="t18" style="left:258.40px;top:74.02px;font-size:12.5px;color:#333;">11</div>
<div class="t" id="t19" style="left:236.00px;top:136.04px;font-size:12px;color:#666666;transform:scaleX(0.8510);transform-origin:0.00px 0;">Font</div>
<div class="t" id="t20" style="left:501.00px;top:74.34px;font-size:12px;color:#444444;letter-spacing:0.067px;">Wrap Text</div>
<div class="t" id="t21" style="left:501.00px;top:105.34px;font-size:12px;color:#444444;letter-spacing:0.223px;">Merge &amp; Center</div>
<div class="t" id="t22" style="left:449.50px;top:136.04px;font-size:12px;color:#666666;transform:scaleX(0.8792);transform-origin:0.00px 0;">Alignment</div>
<div class="t" id="t23" style="left:617.50px;top:74.22px;font-size:12.5px;color:#333;transform:scaleX(0.9407);transform-origin:0.00px 0;">General</div>
<div class="t" id="t24" style="left:650.00px;top:136.04px;font-size:12px;color:#666666;transform:scaleX(0.9067);transform-origin:0.00px 0;">Number</div>
<div class="t" id="t25" style="left:752.70px;top:101.14px;font-size:12px;color:#444444;letter-spacing:0.392px;">Conditional</div>
<div class="t" id="t26" style="left:750.60px;top:117.44px;font-size:12px;color:#444444;letter-spacing:0.325px;">Formatting</div>
<div class="t" id="t27" style="left:823.70px;top:101.14px;font-size:12px;color:#444444;letter-spacing:-0.051px;">Format as</div>
<div class="t" id="t28" style="left:832.60px;top:117.44px;font-size:12px;color:#444444;letter-spacing:-0.253px;">Table</div>
<div class="t" id="t29" style="left:975.00px;top:136.04px;font-size:12px;color:#666666;transform:scaleX(0.8263);transform-origin:0.00px 0;">Styles</div>
<div class="t" id="t30" style="left:1240.30px;top:101.04px;font-size:12px;color:#444444;letter-spacing:-0.056px;">Insert</div>
<div class="t" id="t31" style="left:1280.00px;top:101.04px;font-size:12px;color:#444444;letter-spacing:0.137px;">Delete</div>
<div class="t" id="t32" style="left:1320.30px;top:101.04px;font-size:12px;color:#444444;letter-spacing:0.006px;">Format</div>
<div class="t" id="t33" style="left:1287.00px;top:136.04px;font-size:12px;color:#666666;transform:scaleX(0.8136);transform-origin:0.00px 0;">Cells</div>
<div class="t" id="t34" style="left:1391.00px;top:66.14px;font-size:12px;color:#444444;letter-spacing:0.106px;">AutoSum</div>
<div class="t" id="t35" style="left:1391.00px;top:88.14px;font-size:12px;color:#444444;letter-spacing:0.013px;">Fill</div>
<div class="t" id="t36" style="left:1391.00px;top:111.14px;font-size:12px;color:#444444;letter-spacing:-0.195px;">Clear</div>
<div class="t" id="t37" style="left:1461.60px;top:101.04px;font-size:12px;color:#444444;letter-spacing:0.452px;">Sort &amp;</div>
<div class="t" id="t38" style="left:1461.60px;top:117.34px;font-size:12px;color:#444444;letter-spacing:0.086px;">Filter</div>
<div class="t" id="t39" style="left:1505.00px;top:101.04px;font-size:12px;color:#444444;letter-spacing:0.264px;">Find &amp;</div>
<div class="t" id="t40" style="left:1502.60px;top:117.34px;font-size:12px;color:#444444;letter-spacing:-0.124px;">Select</div>
<div class="t" id="t41" style="left:1441.00px;top:136.04px;font-size:12px;color:#666666;transform:scaleX(0.9162);transform-origin:0.00px 0;">Editing</div>
<div class="t" id="t42" style="left:11.00px;top:167.22px;font-size:12.5px;color:#333;">A1</div>
<div class="t" id="t43" style="left:62.53px;top:239.35px;font-size:14px;color:#217346;transform:translateX(-50%);">A</div>
<div class="t" id="t44" style="left:129.20px;top:239.35px;font-size:14px;color:#222;transform:translateX(-50%);">B</div>
<div class="t" id="t45" style="left:195.87px;top:239.35px;font-size:14px;color:#222;transform:translateX(-50%);">C</div>
<div class="t" id="t46" style="left:262.53px;top:239.35px;font-size:14px;color:#222;transform:translateX(-50%);">D</div>
<div class="t" id="t47" style="left:329.20px;top:239.35px;font-size:14px;color:#222;transform:translateX(-50%);">E</div>
<div class="t" id="t48" style="left:395.87px;top:239.35px;font-size:14px;color:#222;transform:translateX(-50%);">F</div>
<div class="t" id="t49" style="left:462.53px;top:239.35px;font-size:14px;color:#222;transform:translateX(-50%);">G</div>
<div class="t" id="t50" style="left:529.20px;top:239.35px;font-size:14px;color:#222;transform:translateX(-50%);">H</div>
<div class="t" id="t51" style="left:595.87px;top:239.35px;font-size:14px;color:#222;transform:translateX(-50%);">I</div>
<div class="t" id="t52" style="left:662.53px;top:239.35px;font-size:14px;color:#222;transform:translateX(-50%);">J</div>
<div class="t" id="t53" style="left:729.20px;top:239.35px;font-size:14px;color:#222;transform:translateX(-50%);">K</div>
<div class="t" id="t54" style="left:795.87px;top:239.35px;font-size:14px;color:#222;transform:translateX(-50%);">L</div>
<div class="t" id="t55" style="left:862.53px;top:239.35px;font-size:14px;color:#222;transform:translateX(-50%);">M</div>
<div class="t" id="t56" style="left:929.20px;top:239.35px;font-size:14px;color:#222;transform:translateX(-50%);">N</div>
<div class="t" id="t57" style="left:995.87px;top:239.35px;font-size:14px;color:#222;transform:translateX(-50%);">O</div>
<div class="t" id="t58" style="left:1062.53px;top:239.35px;font-size:14px;color:#222;transform:translateX(-50%);">P</div>
<div class="t" id="t59" style="left:1129.20px;top:239.35px;font-size:14px;color:#222;transform:translateX(-50%);">Q</div>
<div class="t" id="t60" style="left:1195.87px;top:239.35px;font-size:14px;color:#222;transform:translateX(-50%);">R</div>
<div class="t" id="t61" style="left:1262.53px;top:239.35px;font-size:14px;color:#222;transform:translateX(-50%);">S</div>
<div class="t" id="t62" style="left:1329.20px;top:239.35px;font-size:14px;color:#222;transform:translateX(-50%);">T</div>
<div class="t" id="t63" style="left:1395.87px;top:239.35px;font-size:14px;color:#222;transform:translateX(-50%);">U</div>
<div class="t" id="t64" style="left:1462.53px;top:239.35px;font-size:14px;color:#222;transform:translateX(-50%);">V</div>
<div class="t" id="t65" style="left:1529.20px;top:239.35px;font-size:14px;color:#222;transform:translateX(-50%);">W</div>
<div class="t" id="t66" style="left:14.20px;top:259.35px;font-size:14px;color:#217346;transform:translateX(-50%);">1</div>
<div class="t" id="t67" style="left:14.20px;top:279.35px;font-size:14px;color:#222;transform:translateX(-50%);">2</div>
<div class="t" id="t68" style="left:14.20px;top:299.35px;font-size:14px;color:#222;transform:translateX(-50%);">3</div>
<div class="t" id="t69" style="left:14.20px;top:319.35px;font-size:14px;color:#222;transform:translateX(-50%);">4</div>
<div class="t" id="t70" style="left:14.20px;top:339.35px;font-size:14px;color:#222;transform:translateX(-50%);">5</div>
<div class="t" id="t71" style="left:14.20px;top:359.35px;font-size:14px;color:#222;transform:translateX(-50%);">6</div>
<div class="t" id="t72" style="left:14.20px;top:379.35px;font-size:14px;color:#222;transform:translateX(-50%);">7</div>
<div class="t" id="t73" style="left:14.20px;top:399.35px;font-size:14px;color:#222;transform:translateX(-50%);">8</div>
<div class="t" id="t74" style="left:14.20px;top:419.35px;font-size:14px;color:#222;transform:translateX(-50%);">9</div>
<div class="t" id="t75" style="left:14.20px;top:439.35px;font-size:14px;color:#222;transform:translateX(-50%);">10</div>
<div class="t" id="t76" style="left:14.20px;top:459.35px;font-size:14px;color:#222;transform:translateX(-50%);">11</div>
<div class="t" id="t77" style="left:14.20px;top:479.35px;font-size:14px;color:#222;transform:translateX(-50%);">12</div>
<div class="t" id="t78" style="left:14.20px;top:499.35px;font-size:14px;color:#222;transform:translateX(-50%);">13</div>
<div class="t" id="t79" style="left:14.20px;top:519.35px;font-size:14px;color:#222;transform:translateX(-50%);">14</div>
<div class="t" id="t80" style="left:14.20px;top:539.35px;font-size:14px;color:#222;transform:translateX(-50%);">15</div>
<div class="t" id="t81" style="left:14.20px;top:559.35px;font-size:14px;color:#222;transform:translateX(-50%);">16</div>
<div class="t" id="t82" style="left:14.20px;top:579.35px;font-size:14px;color:#222;transform:translateX(-50%);">17</div>
<div class="t" id="t83" style="left:311.60px;top:74.72px;font-size:12.5px;color:#444;">A</div>
<div class="t" id="t84" style="left:332.60px;top:74.72px;font-size:12.5px;color:#444;">A</div>
<div class="t" id="t85" style="left:166.30px;top:103.87px;font-size:13.5px;color:#333;font-weight:bold;transform:scaleX(0.85);transform-origin:0 0;">B</div>
<div class="t" id="t86" style="left:189.50px;top:103.85px;font-size:14px;color:#333;font-weight:bold;font-family:'Liberation Serif',serif;font-style:italic;">I</div>
<div class="t" id="t87" style="left:209.50px;top:104.30px;font-size:13px;color:#333;font-weight:bold;">U</div>
<div class="t" id="t88" style="left:321.40px;top:101.33px;font-size:14.5px;color:#333;">A</div>
<div class="t" id="t89" style="left:620.20px;top:102.76px;font-size:16px;color:#333;">$</div>
<div class="t" id="t90" style="left:650.60px;top:103.56px;font-size:16px;color:#333;">%</div>
<div class="t" id="t91" style="left:708.00px;top:103.88px;font-size:9px;color:#444;font-weight:bold;">.0</div>
<div class="t" id="t92" style="left:703.00px;top:110.28px;font-size:9px;color:#444;font-weight:bold;">.00</div>
<div class="t" id="t93" style="left:725.60px;top:103.28px;font-size:9px;color:#444;font-weight:bold;">.00</div>
<div class="t" id="t94" style="left:729.50px;top:110.28px;font-size:9px;color:#444;font-weight:bold;">.0</div>
<div class="t" id="t95" style="left:228.20px;top:164.88px;font-size:15.5px;color:#505050;font-weight:bold;font-family:'Liberation Serif',serif;font-style:italic;transform:scaleY(1.22);transform-origin:0 75%;">fx</div>
<div class="t" id="t96" style="left:887.70px;top:73.70px;font-size:13px;color:#111;letter-spacing:0.859px;">Normal</div>
<div class="t" id="t97" style="left:996.90px;top:73.70px;font-size:13px;color:#9c0006;letter-spacing:0.250px;">Bad</div>
<div class="t" id="t98" style="left:1106.70px;top:73.70px;font-size:13px;color:#006100;letter-spacing:0.309px;">Good</div>
<div class="t" id="t99" style="left:887.70px;top:101.30px;font-size:13px;color:#9c5700;letter-spacing:0.680px;">Neutral</div>
<div class="t" id="t100" style="left:997.90px;top:101.30px;font-size:13px;color:#fa7d00;font-weight:bold;letter-spacing:-0.112px;">Calculation</div>
<div class="t" id="t101" style="left:1106.70px;top:101.30px;font-size:13px;color:#ffffff;font-weight:bold;letter-spacing:-0.240px;">Check Cell</div>
</body></html>
